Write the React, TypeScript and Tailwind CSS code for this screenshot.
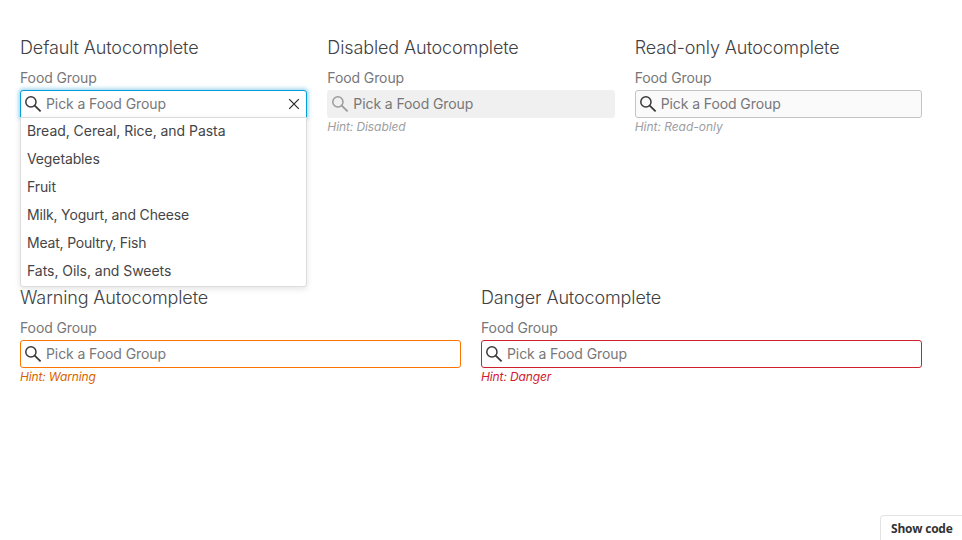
import React from "react";

type Variant = "default" | "disabled" | "readonly" | "warning" | "danger";

const FOODS: [string, string][] = [
  ["Bread, Cereal, Rice, and Pasta", "tracking-[-0.04px]"],
  ["Vegetables", "tracking-[-0.12px]"],
  ["Fruit", "tracking-[-0.1px]"],
  ["Milk, Yogurt, and Cheese", "tracking-[-0.16px]"],
  ["Meat, Poultry, Fish", "tracking-[-0.2px]"],
  ["Fats, Oils, and Sweets", "tracking-[-0.05px]"],
];

const BOX: Record<Variant, string> = {
  default: "border-[#049fd9] bg-white rounded-t-[3px] shadow-[0_0_4px_1px_rgba(100,187,227,0.75)]",
  disabled: "border-[#f0f0f0] bg-[#f0f0f0] rounded-[3px]",
  readonly: "border-[#c4c4c4] bg-[#fafafa] rounded-[3px]",
  warning: "border-[#ff7300] bg-white rounded-[3px]",
  danger: "border-[#cf2030] bg-white rounded-[3px]",
};

const HINT: Record<Variant, string> = {
  default: "",
  disabled: "text-[#9e9ea2] tracking-[-0.09px]",
  readonly: "text-[#9e9ea2] tracking-[-0.03px]",
  warning: "text-[#d96200] tracking-[-0.14px]",
  danger: "text-[#cf2030] tracking-[-0.12px]",
};

function SearchIcon({ muted }: { muted: boolean }) {
  return (
    <svg
      className={"ml-[3px] size-[18px] shrink-0 " + (muted ? "text-[#9b9b9b]" : "text-[#39393b]")}
      viewBox="0 0 18 18"
      fill="none"
      stroke="currentColor"
    >
      <circle cx="6.9" cy="6.9" r="5.1" strokeWidth="1.5" />
      <path d="M10.7 10.7 16.6 16.4" strokeWidth="1.8" />
    </svg>
  );
}

function Menu() {
  return (
    <ul className="absolute inset-x-0 top-[27px] z-10 h-[170px] rounded-b-[3px] border border-[#dcdcdc] bg-white shadow-[0_2px_6px_rgba(0,0,0,0.11)]">
      {FOODS.map(([name, tracking]) => (
        <li key={name} className={"flex h-7 items-center pb-0.5 pl-1.5 text-sm text-[#454547] " + tracking}>
          {name}
        </li>
      ))}
    </ul>
  );
}

function Autocomplete({ title, variant, hint }: { title: string; variant: Variant; hint?: string }) {
  return (
    <section className="h-[250px] min-w-0">
      <h2 className="flex h-[35px] items-center whitespace-nowrap pt-[1px] text-lg font-light tracking-[-0.12px] text-[#414143]">{title}</h2>
      <label className="flex h-[25px] items-center text-sm tracking-[-0.1px] text-[#777779]">Food Group</label>
      <div className="relative">
        <div className={"flex h-7 items-center border " + BOX[variant]}>
          <SearchIcon muted={variant === "disabled"} />
          <span className="ml-1 flex-1 text-sm tracking-[-0.09px] text-[#777779]">Pick a Food Group</span>
          {variant === "default" && (
            <svg className="mr-1.5 size-3" viewBox="0 0 12 12" fill="none" stroke="#28282a" strokeWidth="1.2">
              <path d="M1.2 1.2 10.8 10.8M10.8 1.2 1.2 10.8" />
            </svg>
          )}
        </div>
        {variant === "default" && <Menu />}
      </div>
      {hint && <p className={"text-xs italic leading-[18px] " + HINT[variant]}>{hint}</p>}
    </section>
  );
}

export default function App() {
  return (
    <main className="relative h-[540px] w-[962px] overflow-hidden bg-white px-5 pt-[30px] font-['Inter','Liberation_Sans',sans-serif]">
      <div className="grid w-[902px] grid-cols-3 gap-5">
        <Autocomplete title="Default Autocomplete" variant="default" />
        <Autocomplete title="Disabled Autocomplete" variant="disabled" hint="Hint: Disabled" />
        <Autocomplete title="Read-only Autocomplete" variant="readonly" hint="Hint: Read-only" />
      </div>
      <div className="grid w-[902px] grid-cols-2 gap-5">
        <Autocomplete title="Warning Autocomplete" variant="warning" hint="Hint: Warning" />
        <Autocomplete title="Danger Autocomplete" variant="danger" hint="Hint: Danger" />
      </div>
      <button className="absolute bottom-0 right-0 h-[25px] w-[82px] whitespace-nowrap rounded-tl-[4px] border-l border-t border-[#e3e3e3] bg-white pl-[10px] pt-0.5 text-left font-['Open_Sans','Noto_Sans',sans-serif] text-xs font-bold tracking-[-0.22px] text-[#333333]">
        Show code
      </button>
    </main>
  );
}
